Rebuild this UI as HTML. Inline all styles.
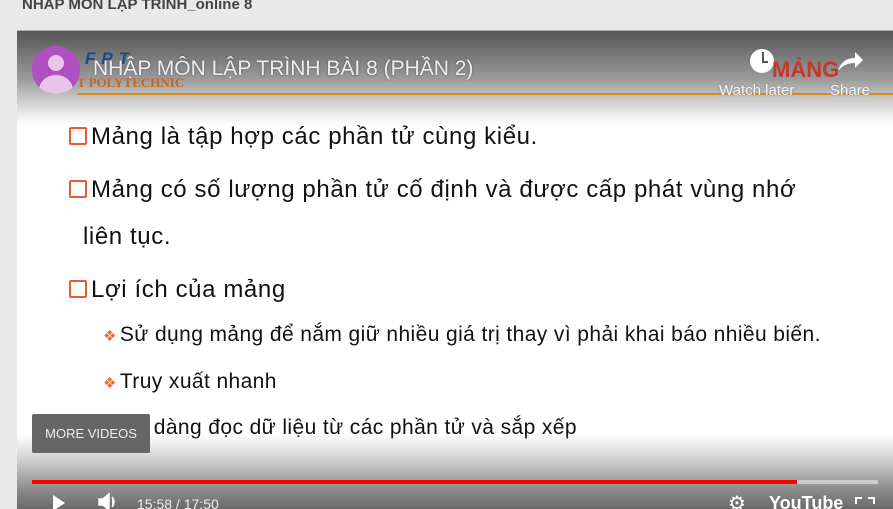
<!DOCTYPE html>
<html><head><meta charset="utf-8"><style>
body{margin:0;width:893px;height:508px;overflow:hidden;background:#e9e9e9;font-family:"Liberation Sans",sans-serif;position:relative}
.title{position:absolute;left:22px;top:-4px;font-weight:bold;font-size:15px;color:#444}
.vid{position:absolute;left:17px;top:30px;width:876px;height:478px;background:#fff;overflow:hidden;border-top:1px solid #aaa}
.topg{position:absolute;left:0;top:0;width:100%;height:95px;background:linear-gradient(#555,#9a9a9a 50%,#e6e6e6 85%,#fff)}
.botg{position:absolute;left:0;bottom:0;width:100%;height:75px;background:linear-gradient(rgba(255,255,255,0),#cfcfcf 35%,#8a8a8a 75%,#6a6a6a)}
.t{position:absolute;color:#111;white-space:nowrap}
.m{font-size:24px;letter-spacing:0.6px}
.s{font-size:21px;letter-spacing:0.4px}
.box{display:inline-block;width:14px;height:14px;border:2.5px solid #e85b30;border-radius:2px;margin-right:4px;vertical-align:-1px}
.d{color:#e86a40;font-size:15px;margin-right:3px}
</style></head><body>
<div class="title">NHAP MÔN LẬP TRÌNH_online 8</div>
<div class="vid">
<div class="topg"></div>
<div style="position:absolute;left:60px;top:62px;width:820px;height:2px;background:#d58a1c"></div>
<div style="position:absolute;left:68px;top:18px;font-weight:bold;font-size:17px;color:#1a4c8c;font-style:italic;letter-spacing:6px">FPT</div>
<div style="position:absolute;left:52px;top:44px;font-family:'Liberation Serif',serif;font-weight:bold;font-size:13px;color:#c9641a">PT POLYTECHNIC</div>
<div style="position:absolute;left:15px;top:15px;width:48px;height:48px;border-radius:50%;background:#b04fc0;overflow:hidden">
<div style="position:absolute;left:16px;top:9px;width:16px;height:16px;border-radius:50%;background:#e8c6ec"></div>
<div style="position:absolute;left:7px;top:29px;width:34px;height:30px;border-radius:50%;background:#e8c6ec"></div></div>
<div style="position:absolute;left:76px;top:26px;font-size:21px;color:#eee;text-shadow:0 0 2px #555">NHẬP MÔN LẬP TRÌNH BÀI 8 (PHẦN 2)</div>
<div style="position:absolute;left:733px;top:18px;width:24px;height:24px;border-radius:50%;background:#fff"></div>
<div style="position:absolute;left:745px;top:21px;width:2px;height:10px;background:#555"></div>
<div style="position:absolute;left:745px;top:30px;width:6px;height:2px;background:#555"></div>
<div style="position:absolute;left:755px;top:26px;font-weight:bold;font-size:22px;color:#c0392b">MẢNG</div>
<svg style="position:absolute;left:818px;top:18px" width="30" height="26"><path d="M3 22 C6 12 13 9 20 9 L20 3 L28 11 L20 19 L20 14 C13 14 8 16 3 22Z" fill="#fff"/></svg>
<div style="position:absolute;left:702px;top:51px;font-size:15px;color:#f4f4f4;text-shadow:0 0 2px #888">Watch later</div>
<div style="position:absolute;left:813px;top:51px;font-size:15px;color:#f4f4f4;text-shadow:0 0 2px #888">Share</div>
<div class="t m" style="left:52px;top:92px"><span class="box"></span>Mảng là tập hợp các phần tử cùng kiểu.</div>
<div class="t m" style="left:52px;top:145px"><span class="box"></span>Mảng có số lượng phần tử cố định và được cấp phát vùng nhớ</div>
<div class="t m" style="left:66px;top:192px">liên tục.</div>
<div class="t m" style="left:52px;top:245px"><span class="box"></span>Lợi ích của mảng</div>
<div class="t s" style="left:86px;top:292px"><span class="d">❖</span>Sử dụng mảng để nắm giữ nhiều giá trị thay vì phải khai báo nhiều biến.</div>
<div class="t s" style="left:86px;top:339px"><span class="d">❖</span>Truy xuất nhanh</div>
<div class="t s" style="left:86px;top:385px"><span class="d">❖</span>Dễ dàng đọc dữ liệu từ các phần tử và sắp xếp</div>
<div class="botg"></div>
<div style="position:absolute;left:15px;top:383px;width:118px;height:39px;background:#666;border-radius:2px;color:#eee;font-size:13px;line-height:39px;text-align:center">MORE VIDEOS</div>
<div style="position:absolute;left:15px;top:449px;width:765px;height:4px;background:#f00"></div>
<div style="position:absolute;left:780px;top:449px;width:81px;height:4px;background:#ccc"></div>
<svg style="position:absolute;left:34px;top:464px" width="16" height="16"><path d="M2 0 L14 8 L2 16Z" fill="#fff"/></svg>
<svg style="position:absolute;left:80px;top:462px" width="22" height="18"><path d="M2 6 H6 L12 1 V17 L6 12 H2Z M15 4 Q19 9 15 14" fill="#fff" stroke="#fff" stroke-width="1.5"/></svg>
<div style="position:absolute;left:120px;top:465px;font-size:14px;color:#eee">15:58 / 17:50</div>
<div style="position:absolute;left:711px;top:460px;font-size:20px;color:#fff">⚙</div>
<div style="position:absolute;left:752px;top:462px;font-weight:bold;font-size:18px;color:#fff">YouTube</div>
<div style="position:absolute;left:838px;top:466px;width:5px;height:5px;border-left:2px solid #fff;border-top:2px solid #fff"></div>
<div style="position:absolute;left:851px;top:466px;width:5px;height:5px;border-right:2px solid #fff;border-top:2px solid #fff"></div>
</div>
</body></html>
